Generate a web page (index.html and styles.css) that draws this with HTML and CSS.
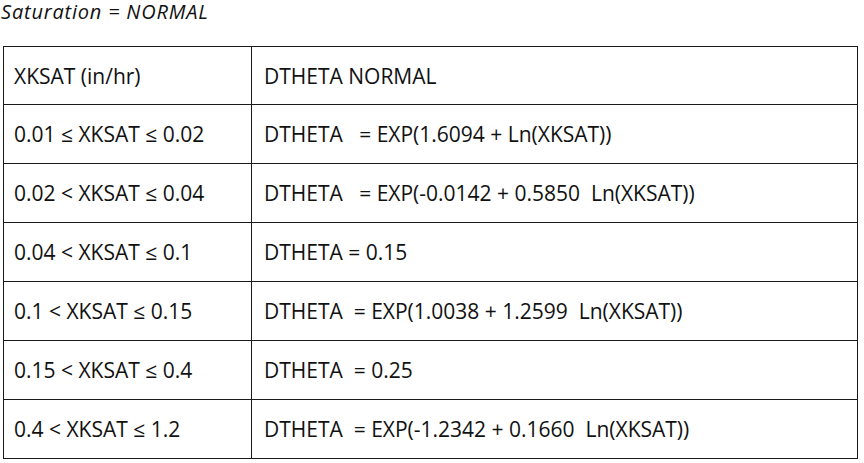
FILE: index.html
```html
<!DOCTYPE html>
<html>
<head>
<meta charset="utf-8">
<link rel="stylesheet" href="styles.css">
</head>
<body>
<div class="title">Saturation = NORMAL</div>
<table class="grid">
  <tr><td class="c1">XKSAT (in/hr)</td><td class="c2">DTHETA NORMAL</td></tr>
  <tr><td class="c1">0.01 ≤ XKSAT ≤ 0.02</td><td class="c2">DTHETA   = EXP(1.6094 + Ln(XKSAT))</td></tr>
  <tr><td class="c1">0.02 &lt; XKSAT ≤ 0.04</td><td class="c2">DTHETA   = EXP(-0.0142 + 0.5850  Ln(XKSAT))</td></tr>
  <tr><td class="c1">0.04 &lt; XKSAT ≤ 0.1</td><td class="c2">DTHETA = 0.15</td></tr>
  <tr><td class="c1">0.1 &lt; XKSAT ≤ 0.15</td><td class="c2">DTHETA  = EXP(1.0038 + 1.2599  Ln(XKSAT))</td></tr>
  <tr><td class="c1">0.15 &lt; XKSAT ≤ 0.4</td><td class="c2">DTHETA  = 0.25</td></tr>
  <tr><td class="c1">0.4 &lt; XKSAT ≤ 1.2</td><td class="c2">DTHETA  = EXP(-1.2342 + 0.1660  Ln(XKSAT))</td></tr>
</table>
</body>
</html>
```
FILE: styles.css
```css
html, body {
  margin: 0;
  padding: 0;
  background: #fff;
}
body {
  font-family: "Open Sans", "Lato", sans-serif;
  color: #111;
}
.title {
  font-style: italic;
  font-size: 20px;
  letter-spacing: 0.8px;
  height: 46px;
  line-height: 24px;
  padding-left: 1px;
}
.grid {
  border-collapse: collapse;
  margin-left: 3px;
  width: 855px;
  font-size: 21px;
}
.grid td {
  border: 1px solid #1a1a1a;
  height: 58px;
  padding: 0;
  vertical-align: middle;
  white-space: pre;
}
.grid tr:first-child td {
  height: 57px;
}
.c1 {
  width: 237px;
  padding-left: 10px !important;
}
.c2 {
  padding-left: 12px !important;
}
```
